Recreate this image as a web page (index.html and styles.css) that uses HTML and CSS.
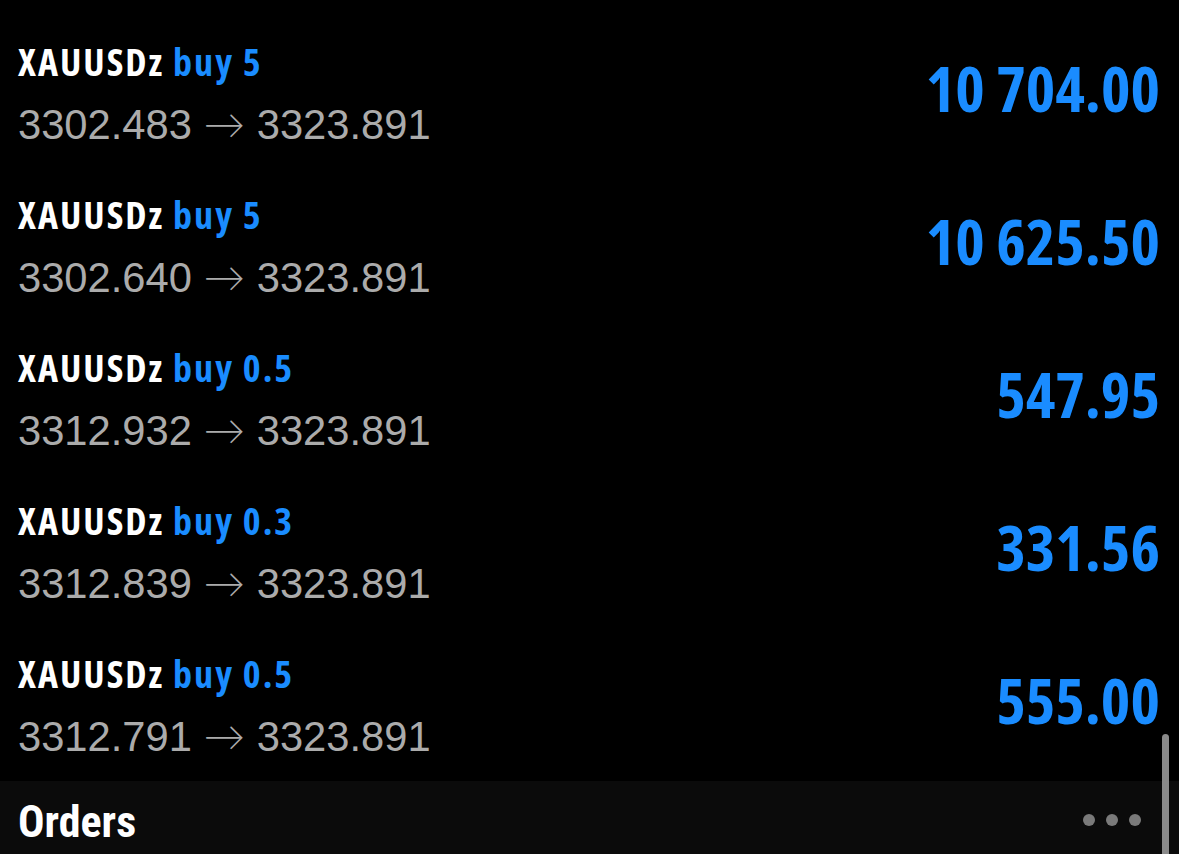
FILE: index.html
```html
<!DOCTYPE html>
<html>
<head>
<meta charset="utf-8">
<link rel="stylesheet" href="styles.css">
</head>
<body>
<div class="screen">
  <div class="list">
    <div class="row">
      <div class="info">
        <div class="title"><span class="sym">XAUUSDz</span> <span class="side">buy 5</span></div>
        <div class="prices">3302.483 <span class="arrow">→</span> 3323.891</div>
      </div>
      <div class="profit">10 704.00</div>
    </div>
    <div class="row">
      <div class="info">
        <div class="title"><span class="sym">XAUUSDz</span> <span class="side">buy 5</span></div>
        <div class="prices">3302.640 <span class="arrow">→</span> 3323.891</div>
      </div>
      <div class="profit">10 625.50</div>
    </div>
    <div class="row">
      <div class="info">
        <div class="title"><span class="sym">XAUUSDz</span> <span class="side">buy 0.5</span></div>
        <div class="prices">3312.932 <span class="arrow">→</span> 3323.891</div>
      </div>
      <div class="profit">547.95</div>
    </div>
    <div class="row">
      <div class="info">
        <div class="title"><span class="sym">XAUUSDz</span> <span class="side">buy 0.3</span></div>
        <div class="prices">3312.839 <span class="arrow">→</span> 3323.891</div>
      </div>
      <div class="profit">331.56</div>
    </div>
    <div class="row">
      <div class="info">
        <div class="title"><span class="sym">XAUUSDz</span> <span class="side">buy 0.5</span></div>
        <div class="prices">3312.791 <span class="arrow">→</span> 3323.891</div>
      </div>
      <div class="profit">555.00</div>
    </div>
  </div>
  <div class="section">
    <div class="section-title">Orders</div>
    <div class="more"><span></span><span></span><span></span></div>
  </div>
  <div class="scrollbar"></div>
</div>
</body>
</html>
```

FILE: styles.css
```css
html, body {
  margin: 0;
  padding: 0;
  background: #000;
}
body {
  width: 1179px;
  height: 854px;
  overflow: hidden;
}
.screen {
  position: relative;
  height: 854px;
  overflow: hidden;
}
.list {
  padding-bottom: 16px;
}
.row {
  display: flex;
  align-items: center;
  justify-content: space-between;
  height: 153px;
  box-sizing: border-box;
  padding: 41px 19px 7px 18px;
}
.info {
  display: flex;
  flex-direction: column;
}
.title {
  font-family: "Open Sans", sans-serif;
  font-stretch: 75%;
  font-weight: bold;
  font-size: 38px;
  letter-spacing: 2px;
  line-height: 40px;
  height: 40px;
  margin-bottom: 18px;
  white-space: nowrap;
}
.sym {
  color: #ffffff;
}
.side {
  color: #1a8cff;
}
.prices {
  font-family: "Liberation Sans", Arial, sans-serif;
  font-size: 41.7px;
  line-height: 48px;
  height: 48px;
  color: #ababab;
  white-space: nowrap;
}
.arrow {
  font-family: "Lato", sans-serif;
  font-weight: 300;
}
.profit {
  font-family: "Open Sans", sans-serif;
  font-stretch: 75%;
  font-weight: bold;
  font-size: 63px;
  line-height: 63px;
  color: #1a8cff;
  margin-bottom: 12px;
  white-space: nowrap;
}
.section {
  display: flex;
  justify-content: space-between;
  align-items: flex-start;
  background: #0b0b0b;
  height: 73px;
  box-sizing: border-box;
  padding: 19px 38px 0 18px;
}
.section-title {
  font-family: "Roboto Condensed", "Roboto", sans-serif;
  font-stretch: 75%;
  font-weight: bold;
  font-size: 44px;
  line-height: 44px;
  color: #ffffff;
}
.more {
  display: flex;
  gap: 11px;
  padding-top: 14px;
}
.more span {
  width: 12px;
  height: 12px;
  border-radius: 50%;
  background: #7a7a7a;
}
.scrollbar {
  position: absolute;
  left: 1162px;
  top: 734px;
  width: 7px;
  height: 140px;
  border-radius: 4px;
  background: #8a8a8a;
}
```
